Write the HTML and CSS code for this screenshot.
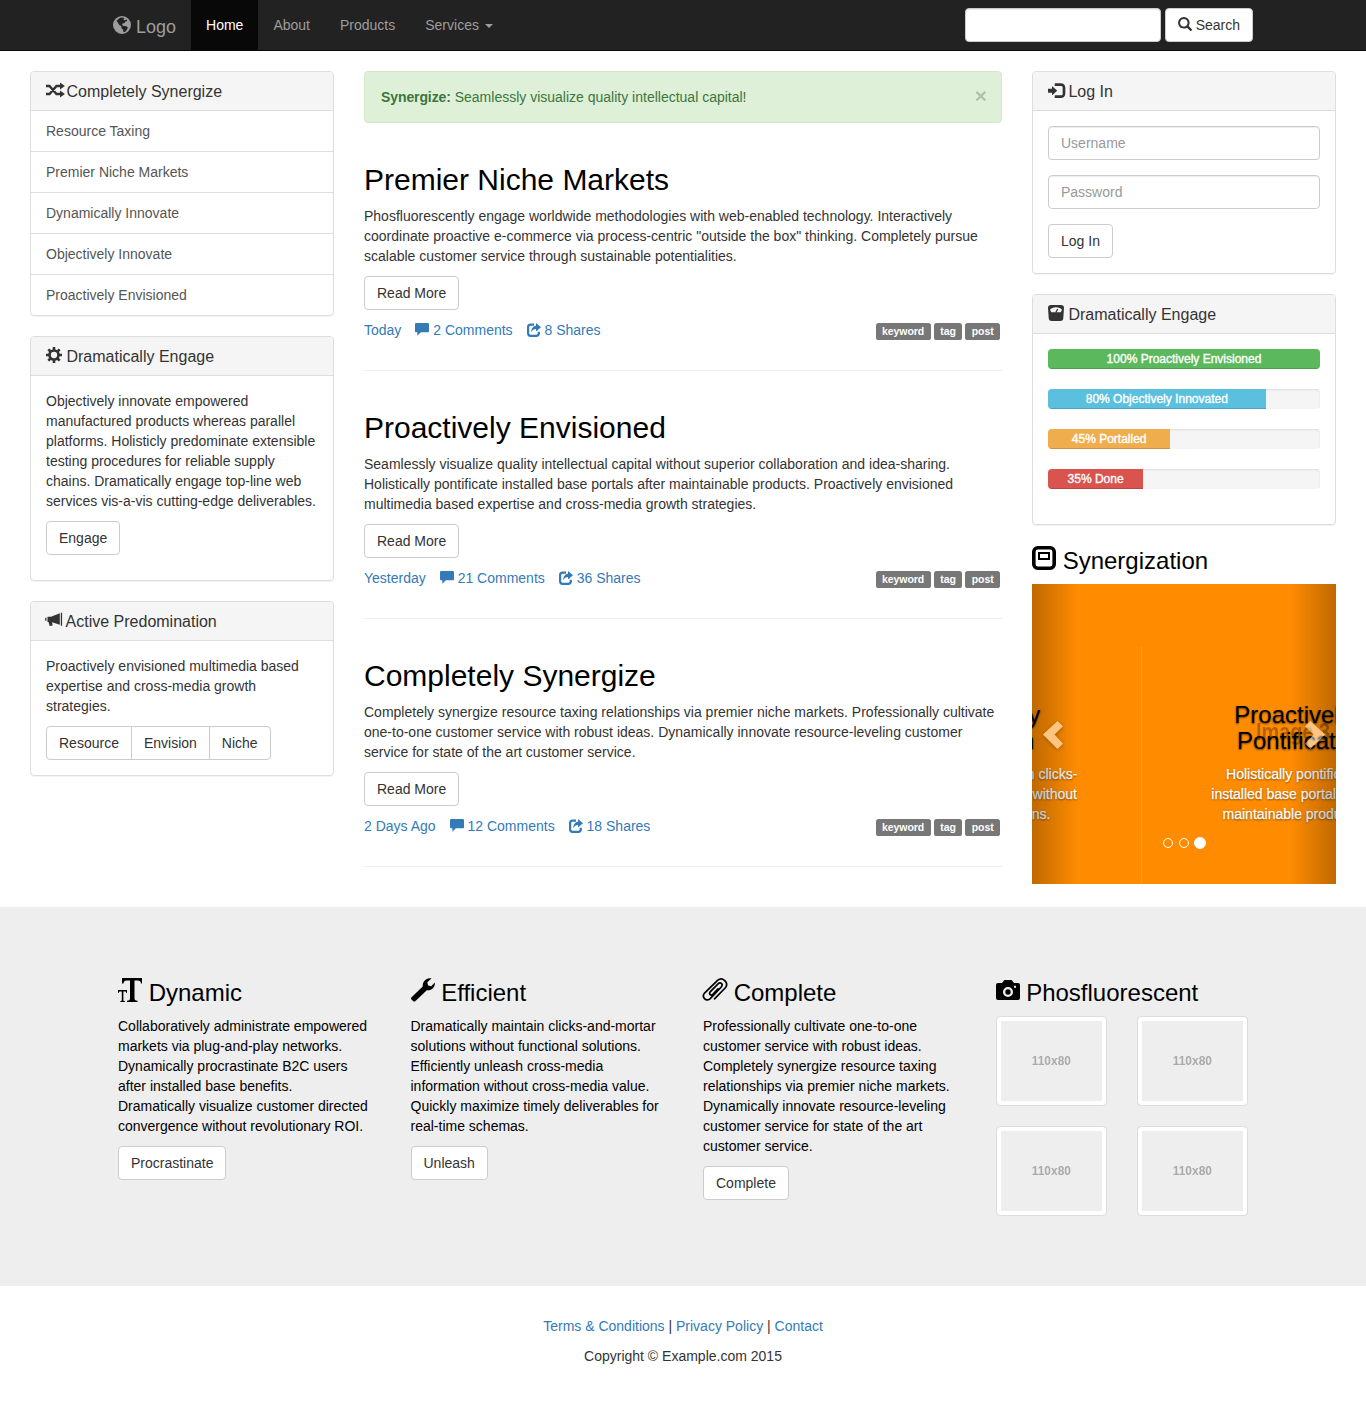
FILE: index.html
```html
<!DOCTYPE html>
<html lang="en">
<head>
<meta charset="utf-8">
<title>Logo</title>
<link rel="stylesheet" href="styles.css">
</head>
<body>
<svg class="sprite" aria-hidden="true">
  <symbol id="i-globe" viewBox="0 0 18 18"><path fill-rule="evenodd" d="M9 0a9 9 0 1 0 0 18A9 9 0 0 0 9 0zM7 1.800l2.500-.4 1.800.7-.8 1.300 1.200.8 1.800-.6.8 1.400-1.800.5-1.300 1.700-1.800.4-.3 1.500 1.500.8 2.800.3 1.500 1.600-1.200 2.200-1.700 2-1.500.1-.5-2.500-1.700-1.500.2-1.900-2.200-1.300-1.200-2L3.500 4.800z"/></symbol>
  <symbol id="i-search" viewBox="0 0 1200 1200"><path transform="matrix(1 0 0 -1 0 1200)" d="M500 1191q100 0 191 -39t156.500 -104.500t104.500 -156.500t39 -191l-1 -2l1 -5q0 -141 -78 -262l275 -274q23 -26 22.500 -44.500t-22.500 -42.500l-59 -58q-26 -20 -46.500 -20t-39.500 20l-275 274q-119 -77 -261 -77l-5 1l-2 -1q-100 0 -191 39t-156.500 104.500t-104.500 156.500t-39 191t39 191t104.500 156.500t156.500 104.500t191 39zM500 1022q-88 0 -162 -43t-117 -117t-43 -162t43 -162t117 -117t162 -43t162 43t117 117t43 162t-43 162t-117 117t-162 43z"/></symbol>
  <symbol id="i-random" viewBox="0 0 16 16"><path fill="none" stroke="currentColor" stroke-width="2.400" d="M0 4h3.500l7 8H15M0 12h3.500l7-8H15"/><path d="M14 .5 18.900 4 14 7.500zM14 8.500l4.900 3.500-4.900 3.500z"/></symbol>
  <symbol id="i-cog" viewBox="0 0 16 16"><circle cx="8" cy="8" r="4.500" fill="none" stroke="currentColor" stroke-width="2.700"/><path stroke="currentColor" stroke-width="2.600" d="M8 0v3M8 13v3M0 8h3M13 8h3M2.300 2.300l2.200 2.200M11.500 11.500l2.200 2.200M2.300 13.700l2.200-2.200M11.500 4.500l2.200-2.200"/></symbol>
  <symbol id="i-bullhorn" viewBox="0 0 16 16"><path d="M14.800.8h1.300v13h-1.300zM1.500 4.800H5l8.800-3.600v11.600L6 10.300l.7 3.200-3 .6L2.500 10h-1zM-.8 5.800H.5v3H-.8z"/></symbol>
  <symbol id="i-comment" viewBox="0 0 1200 1200"><path transform="matrix(1 0 0 -1 0 1200)" d="M100 1200h1000q41 0 70.500 -29.500t29.500 -70.500v-600q0 -41 -29.500 -70.500t-70.500 -29.500h-596l-304 -300v300h-100q-41 0 -70.500 29.500t-29.500 70.500v600q0 41 29.500 70.500t70.500 29.500z"/></symbol>
  <symbol id="i-share" viewBox="0 0 14 14"><path fill="none" stroke="currentColor" stroke-width="2.200" d="M7 1.700H3.600A2.500 2.500 0 0 0 1.100 4.200v6.100a2.500 2.500 0 0 0 2.500 2.500h5.700a2.500 2.500 0 0 0 2.500-2.500V8.800"/><path d="M9 0l5 4.300-5 4.300V6C6.800 6 5.500 7 4.300 9.200 4.300 5.500 6 2.900 9 2.700z"/></symbol>
  <symbol id="i-login" viewBox="0 0 1200 1200"><path transform="matrix(1 0 0 -1 0 1200)" d="M550 1100h400q165 0 257.500 -92.500t92.500 -257.500v-400q0 -165 -92.500 -257.500t-257.500 -92.500h-400q-21 0 -35.500 14.500t-14.500 35.500v100q0 21 14.500 35.500t35.500 14.500h450q41 0 70.500 29.500t29.500 70.500v500q0 41 -29.500 70.500t-70.500 29.500h-450q-21 0 -35.500 14.500t-14.500 35.500v100q0 21 14.500 35.500t35.500 14.500zM338 867l324 -284q16 -14 16 -33t-16 -33l-324 -284q-16 -14 -27 -9t-11 26v150h-250q-21 0 -35.500 14.500t-14.500 35.500v200q0 21 14.500 35.500t35.500 14.500h250v150q0 21 11 26t27 -9z"/></symbol>
  <symbol id="i-scale" viewBox="0 0 16 16"><path fill-rule="evenodd" d="M3 0h10a3 3 0 0 1 3 3l-.7 10a3 3 0 0 1-3 3H3.700a3 3 0 0 1-3-3L0 3a3 3 0 0 1 3-3zM2 4.800 3.300 7.200h9.400L14 4.800C12 1.300 4 1.300 2 4.800z"/><path stroke="currentColor" stroke-width="1.300" d="M7.800 7.500 9.700 4"/></symbol>
  <symbol id="i-window" viewBox="0 0 24 24"><rect x="1.800" y="1.800" width="20.400" height="20.400" rx="4" fill="none" stroke="currentColor" stroke-width="3.600"/><rect x="7" y="7" width="10" height="6" fill="none" stroke="currentColor" stroke-width="2"/></symbol>
  <symbol id="i-text" viewBox="0 0 24 24"><path d="M4 0h20v5.500h-1c-.3-2.200-1-3-3.500-3h-3v17.500c0 2 .5 2.500 3 2.700V24H9v-1.300c2.500-.2 3-.7 3-2.700V2.500H9c-2.500 0-3.200.8-3.500 3H4zM0 12h9v3h-.6c-.3-1-.6-1.500-1.600-1.500H5.400v8.200c0 1 .3 1.200 1.400 1.400V24H2.400v-.9c1.100-.2 1.400-.4 1.400-1.400V13.500H2.200c-1 0-1.300.5-1.600 1.500H0z"/></symbol>
  <symbol id="i-wrench" viewBox="0 0 24 24"><path d="M20.500.6 16.300 4.300l.8 3.200 3.200.7 3.500-3.700c.6 4.300-2.800 8.200-8 7.800L4.500 23c-.8.8-1.700.8-2.400.1L.5 21.600c-.7-.7-.7-1.600.1-2.400L11.700 8.400C11.500 3.300 15.700-.8 20.500.6z"/></symbol>
  <symbol id="i-clip" viewBox="0 0 24 24"><path fill="none" stroke="currentColor" stroke-width="1.700" stroke-linecap="round" d="M11.500 20.800 22.600 9.500C26 4.500 19.500-1.500 14.800 2.200L1.800 14.800C-2 19 3 24 7 20.800L18.300 9C20.500 6 17.500 3.600 15 5.800L7.200 13.800C5.500 16.300 8 18 9.800 16.300L15 10.800"/></symbol>
  <symbol id="i-camera" viewBox="0 0 24 24"><path fill-rule="evenodd" d="M2 5h4l2-2.500C8.600 2 9 2 9.500 2h5c.5 0 .9 0 1.500.5L18 5h4a2 2 0 0 1 2 2v13a2 2 0 0 1-2 2H2a2 2 0 0 1-2-2V7a2 2 0 0 1 2-2zM12 9a5 5 0 1 0 0 10 5 5 0 0 0 0-10zM12 11.300a2.700 2.700 0 1 1 0 5.400 2.700 2.700 0 0 1 0-5.400zM18 7.800v1.900h2V7.800z"/></symbol>
</svg>

<nav class="navbar">
  <div class="container navbar-inner">
    <a class="brand"><svg class="icon"><use href="#i-globe"/></svg> Logo</a>
    <div class="nav">
      <a class="active">Home</a><a>About</a><a>Products</a><a>Services <span class="caret"></span></a>
    </div>
    <form class="search">
      <input class="input search-input" type="text" aria-label="Search">
      <button class="btn" type="button"><svg class="icon"><use href="#i-search"/></svg> Search</button>
    </form>
  </div>
</nav>

<main class="columns">
  <aside class="side">
    <section class="panel">
      <h1 class="panel-title"><svg class="icon"><use href="#i-random"/></svg> Completely Synergize</h1>
      <ul class="list">
        <li>Resource Taxing</li><li>Premier Niche Markets</li><li>Dynamically Innovate</li><li>Objectively Innovate</li><li>Proactively Envisioned</li>
      </ul>
    </section>
    <section class="panel">
      <h1 class="panel-title"><svg class="icon"><use href="#i-cog"/></svg> Dramatically Engage</h1>
      <div class="panel-body">
        <p>Objectively innovate empowered manufactured products whereas parallel platforms. Holisticly predominate extensible testing procedures for reliable supply chains. Dramatically engage top-line web services vis-a-vis cutting-edge deliverables.</p>
        <p class="actions"><button class="btn" type="button">Engage</button></p>
      </div>
    </section>
    <section class="panel">
      <h1 class="panel-title"><svg class="icon"><use href="#i-bullhorn"/></svg> Active Predomination</h1>
      <div class="panel-body">
        <p>Proactively envisioned multimedia based expertise and cross-media growth strategies.</p>
        <div class="btn-group"><button class="btn" type="button">Resource</button><button class="btn" type="button">Envision</button><button class="btn" type="button">Niche</button></div>
      </div>
    </section>
  </aside>

  <div class="posts">
    <div class="alert"><span><strong>Synergize:</strong> Seamlessly visualize quality intellectual capital!</span><span class="close">×</span></div>
    <article class="post">
      <h2>Premier Niche Markets</h2>
      <p>Phosfluorescently engage worldwide methodologies with web-enabled technology. Interactively coordinate proactive e-commerce via process-centric "outside the box" thinking. Completely pursue scalable customer service through sustainable potentialities.</p>
      <p class="actions"><button class="btn" type="button">Read More</button></p>
      <div class="meta">
        <a>Today</a><a><svg class="icon"><use href="#i-comment"/></svg> 2 Comments</a><a><svg class="icon"><use href="#i-share"/></svg> 8 Shares</a>
        <div class="tags"><span class="label">keyword</span> <span class="label">tag</span> <span class="label">post</span></div>
      </div>
    </article>
    <article class="post">
      <h2>Proactively Envisioned</h2>
      <p>Seamlessly visualize quality intellectual capital without superior collaboration and idea-sharing. Holistically pontificate installed base portals after maintainable products. Proactively envisioned multimedia based expertise and cross-media growth strategies.</p>
      <p class="actions"><button class="btn" type="button">Read More</button></p>
      <div class="meta">
        <a>Yesterday</a><a><svg class="icon"><use href="#i-comment"/></svg> 21 Comments</a><a><svg class="icon"><use href="#i-share"/></svg> 36 Shares</a>
        <div class="tags"><span class="label">keyword</span> <span class="label">tag</span> <span class="label">post</span></div>
      </div>
    </article>
    <article class="post">
      <h2>Completely Synergize</h2>
      <p>Completely synergize resource taxing relationships via premier niche markets. Professionally cultivate one-to-one customer service with robust ideas. Dynamically innovate resource-leveling customer service for state of the art customer service.</p>
      <p class="actions"><button class="btn" type="button">Read More</button></p>
      <div class="meta">
        <a>2 Days Ago</a><a><svg class="icon"><use href="#i-comment"/></svg> 12 Comments</a><a><svg class="icon"><use href="#i-share"/></svg> 18 Shares</a>
        <div class="tags"><span class="label">keyword</span> <span class="label">tag</span> <span class="label">post</span></div>
      </div>
    </article>
  </div>

  <aside class="side">
    <section class="panel">
      <h1 class="panel-title"><svg class="icon"><use href="#i-login"/></svg> Log In</h1>
      <form class="panel-body login">
        <input class="input" type="text" placeholder="Username">
        <input class="input" type="password" placeholder="Password">
        <button class="btn" type="button">Log In</button>
      </form>
    </section>
    <section class="panel">
      <h1 class="panel-title"><svg class="icon"><use href="#i-scale"/></svg> Dramatically Engage</h1>
      <div class="panel-body">
        <div class="progress"><div class="bar bar-success" style="width:100%">100% Proactively Envisioned</div></div>
        <div class="progress"><div class="bar bar-info" style="width:80%">80% Objectively Innovated</div></div>
        <div class="progress"><div class="bar bar-warning" style="width:45%">45% Portalled</div></div>
        <div class="progress"><div class="bar bar-danger" style="width:35%">35% Done</div></div>
      </div>
    </section>
    <h3><svg class="icon"><use href="#i-window"/></svg> Synergization</h3>
    <div class="carousel">
      <div class="slide slide-leaving">
        <div class="caption"><h4>Efficiently Maintain</h4><p>Dramatically maintain clicks-and-mortar solutions without functional solutions.</p></div>
      </div>
      <div class="slide slide-entering">
        <span class="placeholder">Image 3</span>
        <div class="caption"><h4>Proactively Pontificate</h4><p>Holistically pontificate installed base portals after maintainable products.</p></div>
      </div>
      <div class="control control-prev"><svg viewBox="0 0 20 28"><path d="M0 13.500 14.500 0 20 5.300 11.500 13.500 20 22.700 14.500 28z"/></svg></div>
      <div class="control control-next"><svg viewBox="0 0 20 28"><path d="M20 13.500 5.500 0 0 5.300 8.500 13.500 0 22.700 5.500 28z"/></svg></div>
      <div class="dots"><span></span><span></span><span class="on"></span></div>
    </div>
  </aside>
</main>

<section class="features">
  <div class="container feature-row">
    <div class="feature">
      <h3><svg class="icon"><use href="#i-text"/></svg> Dynamic</h3>
      <p>Collaboratively administrate empowered markets via plug-and-play networks. Dynamically procrastinate B2C users after installed base benefits. Dramatically visualize customer directed convergence without revolutionary ROI.</p>
      <button class="btn" type="button">Procrastinate</button>
    </div>
    <div class="feature">
      <h3><svg class="icon"><use href="#i-wrench"/></svg> Efficient</h3>
      <p>Dramatically maintain clicks-and-mortar solutions without functional solutions. Efficiently unleash cross-media information without cross-media value. Quickly maximize timely deliverables for real-time schemas.</p>
      <button class="btn" type="button">Unleash</button>
    </div>
    <div class="feature">
      <h3><svg class="icon"><use href="#i-clip"/></svg> Complete</h3>
      <p>Professionally cultivate one-to-one customer service with robust ideas. Completely synergize resource taxing relationships via premier niche markets. Dynamically innovate resource-leveling customer service for state of the art customer service.</p>
      <button class="btn" type="button">Complete</button>
    </div>
    <div class="feature">
      <h3><svg class="icon"><use href="#i-camera"/></svg> Phosfluorescent</h3>
      <div class="thumbs">
        <div class="thumb"><span>110x80</span></div><div class="thumb"><span>110x80</span></div>
        <div class="thumb"><span>110x80</span></div><div class="thumb"><span>110x80</span></div>
      </div>
    </div>
  </div>
</section>

<footer class="footer">
  <p><a>Terms &amp; Conditions</a> | <a>Privacy Policy</a> | <a>Contact</a></p>
  <p>Copyright © Example.com 2015</p>
</footer>
</body>
</html>
```
FILE: styles.css
```css
* { box-sizing: border-box; }
body {
  margin: 0;
  font: 14px/20px "Liberation Sans", Arial, sans-serif;
  color: #333;
  background: #fff;
}
p { margin: 0 0 10px; }
a { color: #337ab7; text-decoration: none; }
h1, h2, h3, h4 { margin: 0; font-weight: 400; }
h2, h3, h4 { color: #000; }
h3 { padding-top: 3px; margin-bottom: 10px; font-size: 24px; line-height: 26px; }
.sprite { display: none; }
.icon {
  display: inline-block;
  width: 1em;
  height: 1em;
  margin-top: -.4em;
  vertical-align: -1px;
  fill: currentColor;
  overflow: visible;
}
.icon use, symbol { overflow: visible; }
.container { width: 1170px; margin: 0 auto; }

/* Controls */
.btn {
  height: 34px;
  padding: 6px 12px;
  border: 1px solid #ccc;
  border-radius: 4px;
  background: #fff;
  color: #333;
  font: inherit;
  white-space: nowrap;
}
.actions { display: flex; }
.input {
  display: block;
  width: 100%;
  height: 34px;
  padding: 6px 12px;
  border: 1px solid #ccc;
  border-radius: 4px;
  background: #fff;
  box-shadow: inset 0 1px 1px rgba(0,0,0,.075);
  color: #555;
  font: inherit;
}
.input::placeholder { color: #999; opacity: 1; }
.btn-group { display: flex; }
.btn-group .btn { border-radius: 0; }
.btn-group .btn + .btn { margin-left: -1px; }
.btn-group .btn:first-child { border-radius: 4px 0 0 4px; }
.btn-group .btn:last-child { border-radius: 0 4px 4px 0; }

/* Navigation */
.navbar { height: 51px; background: #222; border-bottom: 1px solid #080808; }
.navbar-inner { display: flex; height: 50px; padding: 0 15px; }
.brand { padding: 17px 15px 13px 0; font-size: 18px; color: #9d9d9d; }
.nav { display: flex; flex: 1; }
.nav a { padding: 15px; color: #9d9d9d; }
.nav .active { background: #080808; color: #fff; }
.caret {
  display: inline-block;
  margin-left: 2px;
  vertical-align: middle;
  border: 4px solid transparent;
  border-top-color: currentColor;
  border-bottom: 0;
}
.search { display: flex; gap: 4px; padding-top: 8px; }
.search-input { width: 196px; }

/* Page columns */
.columns {
  display: grid;
  grid-template-columns: 304px 638px 304px;
  gap: 30px;
  padding: 20px 30px 0;
  height: 856px;
}
.panel {
  margin-bottom: 20px;
  border: 1px solid #ddd;
  border-radius: 4px;
  box-shadow: 0 1px 1px rgba(0,0,0,.05);
}
.panel-title {
  padding: 11px 15px 9px;
  border-bottom: 1px solid #ddd;
  border-radius: 3px 3px 0 0;
  background: #f5f5f5;
  font-size: 16px;
  line-height: 18px;
}
.panel-body { padding: 15px; }
.list { margin: 0; padding: 0; list-style: none; color: #555; }
.list li { padding: 10px 15px; }
.list li + li { border-top: 1px solid #ddd; }
.login { display: flex; flex-direction: column; align-items: flex-start; gap: 15px; }

/* Posts */
.alert {
  display: flex;
  justify-content: space-between;
  align-items: flex-start;
  height: 52px;
  margin-bottom: 20px;
  padding: 15px 14px 15px 16px;
  border: 1px solid #d6e9c6;
  border-radius: 4px;
  background: #dff0d8;
  color: #3c763d;
}
.alert strong { letter-spacing: -.1px; }
.close {
  margin-top: -2px;
  font-size: 21px;
  font-weight: 700;
  line-height: 21px;
  color: #000;
  text-shadow: 0 1px 0 #fff;
  opacity: .2;
}
.post { height: 228px; margin-bottom: 20px; padding-top: 20px; border-bottom: 1px solid #eee; }
.post h2 { margin-bottom: 10px; font-size: 30px; line-height: 33px; }
.meta { display: flex; gap: 14px; }
.meta .icon { vertical-align: -2px; }
.tags { margin-left: auto; padding-right: 2px; word-spacing: -.5px; }
.label {
  padding: .2em .6em .3em;
  border-radius: .25em;
  background: #777;
  color: #fff;
  font-size: 10.5px;
  font-weight: 700;
  line-height: 1;
  letter-spacing: -.06px;
}

/* Progress bars */
.progress {
  height: 20px;
  margin-bottom: 20px;
  border-radius: 4px;
  overflow: hidden;
  background: #f5f5f5;
  box-shadow: inset 0 1px 2px rgba(0,0,0,.1);
}
.bar {
  height: 20px;
  box-shadow: inset 0 -1px 0 rgba(0,0,0,.15);
  color: #fff;
  font-size: 12px;
  text-align: center;
  -webkit-text-stroke: .35px #fff;
}
.bar-success { background: #5cb85c; }
.bar-info { background: #5bc0de; }
.bar-warning { background: #f0ad4e; }
.bar-danger { background: #d9534f; }

/* Carousel, caught between two slides */
.carousel { position: relative; height: 300px; overflow: hidden; background: #ff8c00; }
.slide { position: absolute; top: 0; width: 304px; height: 300px; }
.slide-leaving { left: -195px; }
.slide-entering { left: 109px; }
.slide-entering::before {
  content: "";
  position: absolute;
  top: 63px;
  bottom: 0;
  left: 0;
  width: 1px;
  background: #ffa02b;
}
.placeholder {
  position: absolute;
  top: 136px;
  left: 0;
  width: 100%;
  text-align: center;
  font-size: 24px;
  font-weight: 700;
  line-height: 24px;
  transform: scaleX(.83);
  color: rgba(0,0,0,.3);
}
.caption {
  position: absolute;
  top: 118px;
  left: 20%;
  right: 20%;
  color: #fff;
  text-align: center;
  text-shadow: 0 1px 2px rgba(0,0,0,.6);
}
.caption h4 { margin-bottom: 9px; font-size: 24px; line-height: 26.4px; }
.caption p { -webkit-text-stroke: .25px #fff; }
.control {
  position: absolute;
  top: 0;
  bottom: 0;
  width: 15%;
  opacity: .5;
}
.control-prev { left: 0; background: linear-gradient(to right, rgba(0,0,0,.5), rgba(0,0,0,0)); }
.control-next { right: 0; background: linear-gradient(to left, rgba(0,0,0,.5), rgba(0,0,0,0)); }
.control svg {
  position: absolute;
  top: 137px;
  left: 11px;
  width: 20px;
  height: 28px;
  fill: #fff;
  filter: drop-shadow(0 1px 2px rgba(0,0,0,.6));
}
.control-next svg { left: auto; right: 11px; }
.dots {
  position: absolute;
  left: 131px;
  top: 253px;
  display: flex;
  align-items: center;
  gap: 6px;
}
.dots span { width: 10px; height: 10px; border: 1px solid #fff; border-radius: 50%; }
.dots .on { width: 12px; height: 12px; margin-left: -1px; background: #fff; }

/* Feature strip */
.features { height: 379px; padding-top: 70px; background: #eee; color: #000; }
.feature-row { display: grid; grid-template-columns: repeat(4, 1fr); }
.feature { padding: 0 20px; }
.thumbs { display: grid; grid-template-columns: 1fr 1fr; gap: 20px 30px; }
.thumb {
  display: flex;
  align-items: center;
  justify-content: center;
  height: 90px;
  border: 1px solid #ddd;
  border-radius: 4px;
  background: #eee;
  box-shadow: inset 0 0 0 4px #fff;
  color: #aaa;
  font-size: 13px;
  font-weight: 700;
}
.thumb span { transform: scaleX(.918); }

.footer { height: 120px; padding-top: 30px; text-align: center; }
```
